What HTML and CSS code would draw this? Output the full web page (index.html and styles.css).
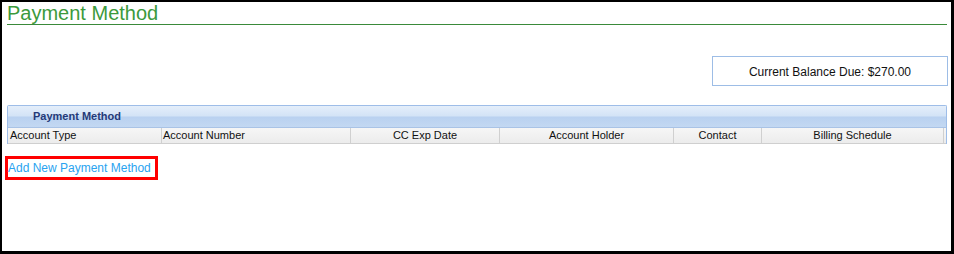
FILE: index.html
```html
<!DOCTYPE html>
<html>
<head>
<meta charset="utf-8">
<link rel="stylesheet" href="styles.css">
</head>
<body>
<div class="frame">
  <h1 class="title">Payment Method</h1>
  <div class="balance-row">
    <div class="balance">Current Balance Due: $270.00</div>
  </div>
  <div class="panel">
    <div class="panel-head">Payment Method</div>
    <div class="cols">
      <div class="col c1">Account Type</div>
      <div class="col c2">Account Number</div>
      <div class="col c3 center">CC Exp Date</div>
      <div class="col c4 center">Account Holder</div>
      <div class="col c5 center">Contact</div>
      <div class="col c6 center">Billing Schedule</div>
      <div class="col c7"></div>
    </div>
  </div>
  <div class="add-wrap"><a class="add" href="#">Add New Payment Method</a></div>
</div>
</body>
</html>
```
FILE: styles.css
```css
html, body { margin: 0; padding: 0; background: #fff; }
.frame {
  box-sizing: border-box;
  width: 954px;
  height: 254px;
  border-style: solid;
  border-color: #000;
  border-width: 2px 3px 3px 2px;
  font-family: "Liberation Sans", Arial, sans-serif;
  padding: 0 4px 0 5px;
}
.title {
  margin: 0;
  font-weight: normal;
  font-size: 20px;
  line-height: 22px;
  color: #3c9a3c;
  border-bottom: 1px solid #3a8a3a;
  padding-left: 0;
  height: 22px;
}
.balance-row {
  display: flex;
  justify-content: flex-end;
  margin-top: 31px;
  margin-right: -1px;
}
.balance {
  box-sizing: border-box;
  width: 236px;
  height: 30px;
  border: 1px solid #9dbde6;
  font-size: 12px;
  display: flex;
  align-items: center;
  justify-content: center;
  color: #111;
  padding-top: 1px;
}
.panel {
  margin-top: 19px;
  border: 1px solid #9ebde8;
  border-bottom: none;
  border-radius: 2px 2px 0 0;
}
.panel-head {
  height: 21px;
  background: linear-gradient(#e4eefa 0%, #d3e3f6 48%, #b9d1f0 52%, #c3d8f2 100%);
  border-bottom: 1px solid #a9c3e6;
  color: #253a78;
  font-weight: bold;
  font-size: 11px;
  line-height: 21px;
  padding-left: 25px;
}
.cols {
  display: flex;
  height: 15px;
  background: linear-gradient(#f6f6f6, #ececec);
  border-bottom: 1px solid #cfcfcf;
  font-size: 11px;
  line-height: 15px;
  color: #111;
}
.col {
  box-sizing: border-box;
  border-right: 1px solid #d0d0d0;
  padding-left: 2px;
  white-space: nowrap;
}
.center { text-align: center; padding-left: 0; }
.c1 { width: 154px; }
.c2 { width: 189px; padding-left: 1px; }
.c3 { width: 149px; }
.c4 { width: 174px; }
.c5 { width: 88px; }
.c6 { width: 182px; }
.c7 { flex: 1; border-right: none; }
.add-wrap { margin-top: 12px; margin-left: -2px; display: flex; }
.add {
  box-sizing: border-box;
  border: 3px solid #ff0000;
  height: 24px;
  width: 153px;
  padding-left: 0;
  font-size: 12px;
  line-height: 18px;
  color: #29a3f0;
  text-decoration: none;
  white-space: nowrap;
}
```
